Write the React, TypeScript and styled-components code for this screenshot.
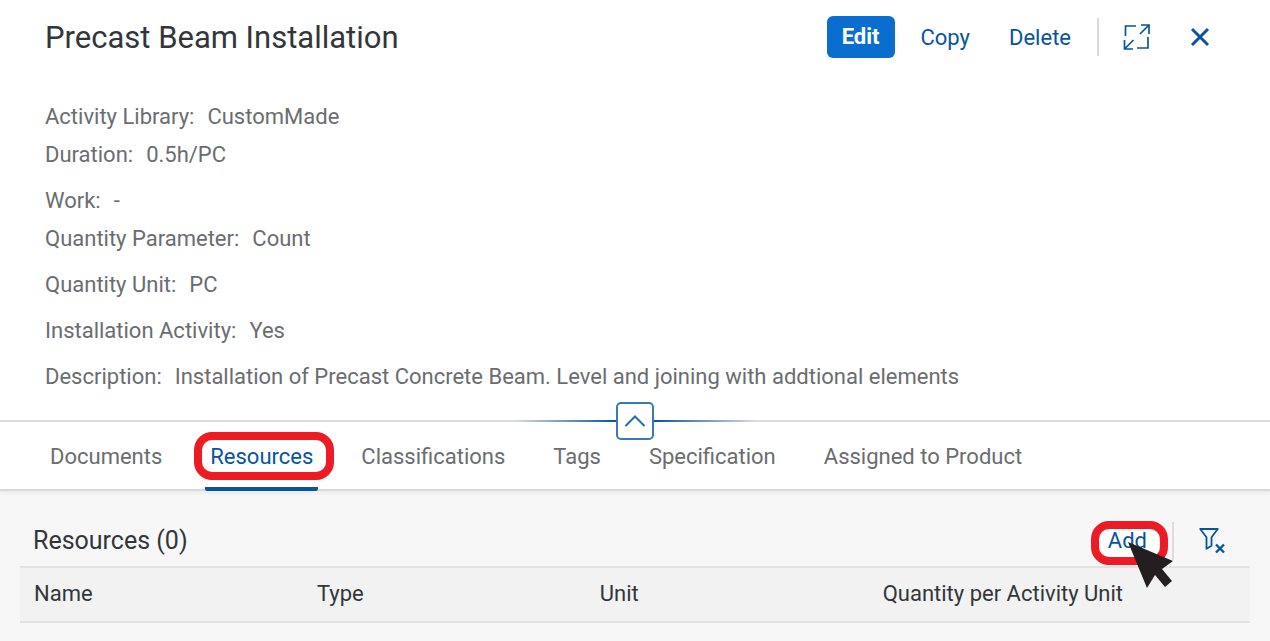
import React from "react";
import styled, { createGlobalStyle } from "styled-components";

const blue = "#0854a0";

const GlobalStyle = createGlobalStyle`
  * { box-sizing: border-box; }
  body {
    margin: 0;
    background: #f7f7f7;
    color: #32363a;
    font-family: Roboto, "Liberation Sans", sans-serif;
    font-size: 22px;
    line-height: 30px;
  }
  button { font: inherit; cursor: pointer; }
`;

const Header = styled.header`
  position: relative;
  background: #fff;
  padding: 16px 49px 28px 45px;
  border-bottom: 2px solid #dcdcdc;
`;

const TitleRow = styled.div`
  display: flex;
  align-items: center;
  justify-content: space-between;
  height: 42px;
`;

const Title = styled.h1`
  margin: 0;
  padding-top: 2px;
  font-size: 31px;
  line-height: 40px;
  font-weight: 400;
`;

const Actions = styled.div`
  display: flex;
  align-items: center;
  gap: 13px;
`;

const ActionButton = styled.button<{ $primary?: boolean }>`
  height: 42px;
  padding: ${(p) => (p.$primary ? "0 15px" : "2px 13px 0")};
  border: 0;
  border-radius: 6px;
  background: ${(p) => (p.$primary ? "#0a6ed1" : "transparent")};
  color: ${(p) => (p.$primary ? "#fff" : blue)};
  font-weight: ${(p) => (p.$primary ? 700 : 400)};
`;

const IconButton = styled.button`
  display: grid;
  place-items: center;
  width: 42px;
  height: 42px;
  padding: 0;
  border: 0;
  background: transparent;
  color: ${blue};
`;

const Separator = styled.span`
  width: 2px;
  height: 38px;
  background: #dcdcdc;
`;

const HeaderIcons = styled.div`
  display: flex;
  gap: 21px;
  padding-left: 4px;
`;

const Details = styled.dl`
  display: flex;
  flex-direction: column;
  gap: 16px;
  margin: 44px 0 0;
  color: #6a6d70;
`;

const DetailGroup = styled.div`
  display: flex;
  flex-direction: column;
  gap: 8px;
`;

const Detail = styled.div`
  display: flex;
  gap: 13px;
  dt, dd { margin: 0; }
`;

const CollapseBar = styled.div`
  position: absolute;
  left: 50%;
  bottom: -20px;
  transform: translateX(-50%);
  display: flex;
  align-items: center;
  z-index: 1;
`;

const FadeLine = styled.span<{ $to: "left" | "right" }>`
  width: 102px;
  height: 2px;
  background: linear-gradient(to ${(p) => p.$to}, ${blue}, transparent);
`;

const CollapseButton = styled.button`
  display: grid;
  place-items: center;
  width: 38px;
  height: 38px;
  padding: 0;
  border: 2px solid #3a78b8;
  border-radius: 5px;
  background: #fff;
  color: #2a6cb0;
`;

const Tabs = styled.nav`
  display: flex;
  gap: 38px;
  height: 69px;
  padding: 0 45px;
  background: #fff;
  border-bottom: 2px solid #d9d9d9;
  box-shadow: 0 2px 4px rgba(0, 0, 0, 0.06);
`;

const Tab = styled.button<{ $active?: boolean }>`
  position: relative;
  height: 69px;
  padding: 4px 5px 0;
  border: 0;
  border-bottom: 4px solid ${(p) => (p.$active ? blue : "transparent")};
  border-radius: 2px;
  background: transparent;
  color: ${(p) => (p.$active ? blue : "#6a6d70")};
  white-space: nowrap;
`;

const Highlight = styled.span<{ $inset: string; $behind?: boolean }>`
  position: absolute;
  inset: ${(p) => p.$inset};
  z-index: ${(p) => (p.$behind ? -1 : 0)};
  border: 8px solid #ed1c24;
  border-radius: 18px;
  background: ${(p) => (p.$behind ? "#fff" : "transparent")};
  pointer-events: none;
`;

const Content = styled.main`
  padding: 27px 20px 0;
`;

const Toolbar = styled.div`
  display: flex;
  align-items: center;
  justify-content: space-between;
  height: 45px;
  margin-bottom: 3px;
  padding: 0 17px 0 13px;
`;

const ToolbarTitle = styled.h2`
  margin: 0;
  font-size: 25px;
  font-weight: 400;
`;

const ToolbarActions = styled.div`
  display: flex;
  align-items: center;
  gap: 17px;
`;

const AddButton = styled(ActionButton)`
  position: relative;
  z-index: 1;
  padding: 0 8px;
`;

const Pointer = styled.svg`
  position: absolute;
  top: 21px;
  left: 27px;
`;

const Table = styled.table`
  width: 100%;
  table-layout: fixed;
  border-collapse: collapse;
  background: #f2f2f2;
  border-top: 2px solid #e2e2e2;
  border-bottom: 2px solid #e2e2e2;
`;

const HeadCell = styled.th<{ $wide?: boolean }>`
  width: ${(p) => (p.$wide ? "31%" : "23%")};
  height: 55px;
  padding: 0 0 2px 14px;
  text-align: left;
  font-weight: 400;
  white-space: nowrap;
`;

const ExpandIcon = () => (
  <svg width="28" height="28" viewBox="0 0 28 28" fill="none" stroke="currentColor" strokeWidth="1.7" aria-hidden="true">
    <path d="M2.5 13V3H13M18 2h8v9M26 2l-9 9M25 14v11H14M10 26H1.500v-9M1.500 26l9-9" />
  </svg>
);

const CloseIcon = () => (
  <svg width="20" height="20" viewBox="0 0 20 20" fill="none" stroke="currentColor" strokeWidth="3" aria-hidden="true">
    <path d="M2 2l16 16M18 2L2 18" />
  </svg>
);

const ChevronUp = () => (
  <svg width="22" height="14" viewBox="0 0 22 14" fill="none" stroke="currentColor" strokeWidth="2" strokeLinecap="round" aria-hidden="true">
    <path d="M2 11.5l9-9 9 9" />
  </svg>
);

const ClearFilterIcon = () => (
  <svg width="28" height="28" viewBox="0 0 28 28" fill="none" stroke="currentColor" aria-hidden="true">
    <path d="M2.200 2h17.600l-6.300 8.200v8.600l-5 3v-11.600z" strokeWidth="1.8" strokeLinejoin="round" />
    <path d="M18 17.500l8 8M26 17.500l-8 8" strokeWidth="2.4" />
  </svg>
);

const detailGroups = [
  [["Activity Library:", "CustomMade"], ["Duration:", "0.5h/PC"]],
  [["Work:", "-"], ["Quantity Parameter:", "Count"]],
  [["Quantity Unit:", "PC"]],
  [["Installation Activity:", "Yes"]],
  [["Description:", "Installation of Precast Concrete Beam. Level and joining with addtional elements"]],
];

const tabs = ["Documents", "Resources", "Classifications", "Tags", "Specification", "Assigned to Product"];
const columns = ["Name", "Type", "Unit", "Quantity per Activity Unit"];

export default function App() {
  return (
    <>
      <GlobalStyle />
      <Header>
        <TitleRow>
          <Title>Precast Beam Installation</Title>
          <Actions>
            <ActionButton $primary>Edit</ActionButton>
            <ActionButton>Copy</ActionButton>
            <ActionButton>Delete</ActionButton>
            <Separator />
            <HeaderIcons>
              <IconButton aria-label="Full screen"><ExpandIcon /></IconButton>
              <IconButton aria-label="Close"><CloseIcon /></IconButton>
            </HeaderIcons>
          </Actions>
        </TitleRow>
        <Details>
          {detailGroups.map((group) => (
            <DetailGroup key={group[0][0]}>
              {group.map(([label, value]) => (
                <Detail key={label}>
                  <dt>{label}</dt>
                  <dd>{value}</dd>
                </Detail>
              ))}
            </DetailGroup>
          ))}
        </Details>
        <CollapseBar>
          <FadeLine $to="left" />
          <CollapseButton aria-label="Collapse header"><ChevronUp /></CollapseButton>
          <FadeLine $to="right" />
        </CollapseBar>
      </Header>
      <Tabs>
        {tabs.map((name) => {
          const active = name === "Resources";
          return (
            <Tab key={name} $active={active} aria-current={active ? "page" : undefined}>
              {name}
              {active && <Highlight $inset="10px -16px 7px -11px" />}
            </Tab>
          );
        })}
      </Tabs>
      <Content>
        <Toolbar>
          <ToolbarTitle>Resources (0)</ToolbarTitle>
          <ToolbarActions>
            <AddButton>
              <Highlight $behind $inset="1px -13px -3px -9px" />
              Add
              <Pointer width="47" height="48" viewBox="0 0 47 48" aria-hidden="true">
                <path d="M1 1l45 19-11 8 10 12-7 6-10-12-8 13z" fill="#231f20" />
              </Pointer>
            </AddButton>
            <Separator />
            <IconButton aria-label="Clear filter"><ClearFilterIcon /></IconButton>
          </ToolbarActions>
        </Toolbar>
        <Table>
          <thead>
            <tr>
              {columns.map((name, i) => (
                <HeadCell key={name} scope="col" $wide={i === 3}>{name}</HeadCell>
              ))}
            </tr>
          </thead>
        </Table>
      </Content>
    </>
  );
}
